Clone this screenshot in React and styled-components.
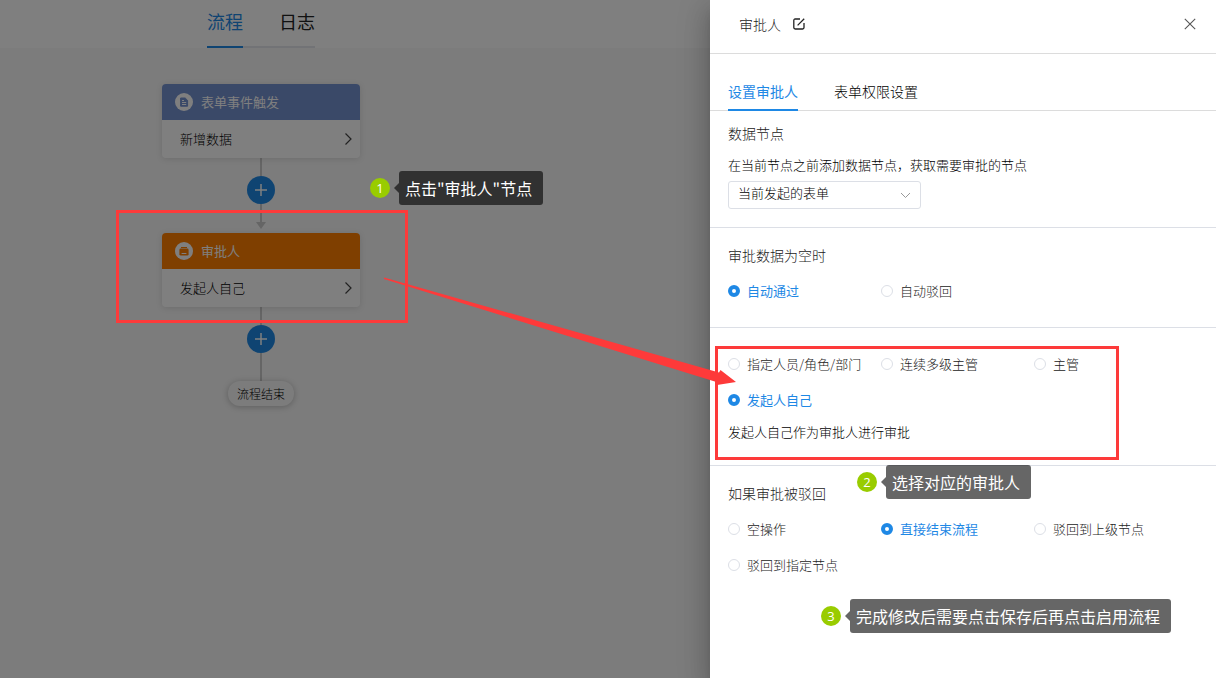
import React, { useState } from "react";
import styled, { createGlobalStyle } from "styled-components";

const GlobalStyle = createGlobalStyle`
  * {
    box-sizing: border-box;
  }

  body {
    margin: 0;
    color: #000;
    font-family: "Noto Sans CJK SC", sans-serif;
    font-size: 13px;
    font-weight: 300;
    line-height: 20px;
  }

  button, input, select {
    font: inherit;
    color: inherit;
  }

  button {
    padding: 0;
    border: 0;
    background: none;
    cursor: pointer;
  }

  svg {
    display: block;
  }
`;

const Page = styled.div`
  display: grid;
  grid-template-columns: minmax(0, 1fr) 506px;
  min-height: 100vh;
  overflow: hidden;
`;

const Workspace = styled.main`
  position: relative;
  background: #f8f8f8;
`;

const TopBar = styled.header`
  display: flex;
  justify-content: center;
  height: 48px;
  padding-right: 188px;
  background: #fff;
`;

const TopTabs = styled.nav`
  display: flex;
  gap: 36px;
  border-bottom: 2px solid #e4e7ed;
`;

const TopTab = styled.button`
  height: 48px;
  padding-bottom: 5px;
  font-size: 18px;
  font-weight: 400;
  color: ${(props) => (props.$active ? "#1e88e5" : "#222")};
  border-bottom: 2px solid ${(props) => (props.$active ? "#1e88e5" : "transparent")};
`;

const Flow = styled.div`
  display: flex;
  flex-direction: column;
  align-items: center;
  padding: 36px 188px 36px 0;
`;

const NodeWrap = styled.div`
  position: relative;
  width: 198px;
`;

const Node = styled.section`
  border-radius: 4px;
  overflow: hidden;
  background: #fff;
  box-shadow: 0 1px 6px rgba(0, 0, 0, 0.12);
`;

const NodeHead = styled.div`
  display: flex;
  align-items: center;
  gap: 8px;
  height: 36px;
  padding: 0 13px;
  font-weight: 400;
  color: #fff;
  background: ${(props) => props.$color};
`;

const NodeBody = styled.button`
  display: flex;
  align-items: center;
  justify-content: space-between;
  width: 100%;
  height: 38px;
  padding: 0 8px 0 18px;
`;

const Line = styled.div`
  width: 2px;
  height: ${(props) => (props.$long ? 28 : 18)}px;
  background: #cacaca;
`;

const ArrowDown = styled.div`
  margin-bottom: 4px;
  border: 5px solid transparent;
  border-top: 7px solid #cacaca;
  border-bottom: 0;
`;

const AddButton = styled.button`
  display: grid;
  place-items: center;
  width: 28px;
  height: 28px;
  border-radius: 50%;
  color: #fff;
  background: #1e88e5;
`;

const EndNode = styled.div`
  padding: 3px 9px 2px;
  border-radius: 12px;
  font-size: 12px;
  background: #f8f8f8;
  box-shadow: 0 1px 6px rgba(0, 0, 0, 0.24);
`;

const Mask = styled.div`
  position: absolute;
  inset: 0;
  z-index: 1;
  background: rgba(0, 0, 0, 0.5);
`;

const Drawer = styled.aside`
  position: relative;
  z-index: 2;
  background: #fff;
  box-shadow: 0 8px 10px -5px rgba(0, 0, 0, 0.2),
    0 16px 24px 2px rgba(0, 0, 0, 0.14), 0 6px 30px 5px rgba(0, 0, 0, 0.12);
`;

const DrawerHead = styled.header`
  display: flex;
  align-items: center;
  gap: 12px;
  height: 54px;
  padding: 0 20px 6px 29px;
  border-bottom: 1px solid #dcdcdc;
  color: #222;
`;

const DrawerTitle = styled.h1`
  margin: 0;
  font-size: 14px;
  font-weight: inherit;
  line-height: 18px;
`;

const CloseButton = styled.button`
  margin-left: auto;
  color: #555;
`;

const DrawerTabs = styled.nav`
  display: flex;
  gap: 36px;
  padding: 18px 18px 0;
  box-shadow: inset 0 -1px #dcdcdc;
`;

const DrawerTab = styled.button`
  height: 39px;
  font-size: 14px;
  font-weight: ${(props) => (props.$active ? 400 : 300)};
  color: ${(props) => (props.$active ? "#1e88e5" : "#000")};
  border-bottom: 2px solid ${(props) => (props.$active ? "#1e88e5" : "transparent")};
`;

const Section = styled.section`
  position: relative;
  padding: ${(props) => props.$pad};
  border-bottom: 1px solid #dcdfe6;

  &:last-of-type {
    border-bottom: 0;
  }
`;

const SectionTitle = styled.h2`
  margin: 0 0 ${(props) => props.$gap || "17px"};
  font-size: 14px;
  font-weight: inherit;
  line-height: 18px;
  color: #222;
`;

const SelectLabel = styled.label`
  display: block;
  margin-bottom: 6px;
`;

const SelectBox = styled.div`
  display: grid;
  align-items: center;
  width: 193px;

  select, svg {
    grid-area: 1 / 1;
  }

  svg {
    justify-self: end;
    margin-right: 10px;
    color: #999;
    pointer-events: none;
  }
`;

const Select = styled.select`
  appearance: none;
  height: 28px;
  padding: 0 28px 4px 9px;
  border: 1px solid #dcdfe6;
  border-radius: 3px;
  background: #fff;
`;

const RadioGrid = styled.div`
  display: grid;
  grid-template-columns: repeat(3, 153px);
  row-gap: 16px;
`;

const RadioLabel = styled.label`
  display: flex;
  align-items: center;
  gap: 7px;
  white-space: nowrap;
  color: #222;

  &:has(input:checked) {
    font-weight: 400;
    color: #1e88e5;
  }
`;

const RadioInput = styled.input`
  appearance: none;
  width: 12px;
  height: 12px;
  margin: 0;
  border: 1px solid #dcdfe6;
  border-radius: 50%;
  background: #fff;

  &:checked {
    border: 4px solid #1e88e5;
  }
`;

const Hint = styled.p`
  margin: 12px 0 0;
`;

const Highlight = styled.div`
  position: absolute;
  z-index: 2;
  inset: ${(props) => props.$inset};
  border: 3px solid #fd3a3a;
  pointer-events: none;
`;

const Callout = styled.div`
  position: absolute;
  z-index: 3;
  left: ${(props) => props.$left}px;
  top: ${(props) => props.$top}px;
  display: flex;
  align-items: center;
  white-space: nowrap;
  font-weight: 400;
  color: #fff;
`;

const Badge = styled.span`
  width: 20px;
  height: 20px;
  border-radius: 50%;
  font-family: "Open Sans", sans-serif;
  text-align: center;
  background: #99cc00;
`;

const Pointer = styled.span`
  margin-left: 4px;
  border: 5px solid transparent;
  border-right-color: rgba(0, 0, 0, 0.6);
  border-left: 0;
`;

const Bubble = styled.span`
  padding: 7px 11px 7px 6px;
  border-radius: 3px;
  font-size: 16px;
  background: rgba(0, 0, 0, 0.6);
`;

const LongArrow = styled.svg`
  position: absolute;
  z-index: 3;
  left: -330px;
  top: 270px;
  pointer-events: none;
`;

function ChevronRight() {
  return (
    <svg width="8" height="14" viewBox="0 0 8 14" fill="none" stroke="#444" strokeWidth="1.2">
      <path d="M1.5 1.5 7 7l-5.5 5.5" />
    </svg>
  );
}

function Plus() {
  return (
    <svg width="14" height="14" viewBox="0 0 14 14" fill="none" stroke="currentColor" strokeWidth="1.5">
      <path d="M7 1v12M1 7h12" />
    </svg>
  );
}

function FormIcon({ color }) {
  return (
    <svg width="18" height="18" viewBox="0 0 18 18">
      <circle cx="9" cy="9" r="9" fill="#fff" />
      <path d="M5.6 5h4.6l2.4 2.4v5.8h-7z" fill={color} stroke={color} strokeLinejoin="round" />
      <path d="M7 7.5h2M7 9.5h4.2M7 11.5h4.2" stroke="#fff" />
    </svg>
  );
}

function ApproveIcon({ color }) {
  return (
    <svg width="18" height="18" viewBox="0 0 18 18" fill="none">
      <circle cx="9" cy="9" r="9" fill="#fff" />
      <path d="M6 5.5h6" stroke={color} />
      <rect x="4.4" y="6.6" width="9.2" height="7" rx="1.4" fill={color} />
      <path d="M6.6 11.5h4.8" stroke="#fff" />
    </svg>
  );
}

function EditIcon() {
  return (
    <svg width="12" height="12" viewBox="0 0 12 12" fill="none" stroke="currentColor" strokeWidth="1.3">
      <path d="M7 1H2.2Q.8 1 .8 2.4v7.2Q.8 11 2.2 11h7.4Q11 11 11 9.6V5M4.6 7.4 11.2.8" />
    </svg>
  );
}

function CloseIcon() {
  return (
    <svg width="12" height="12" viewBox="0 0 12 12" fill="none" stroke="currentColor" strokeWidth="1.1">
      <path d="m.8.8 10.4 10.4M11.2.8.8 11.2" />
    </svg>
  );
}

function FlowNode({ title, text, color, icon, children }) {
  return (
    <NodeWrap>
      <Node>
        <NodeHead $color={color}>
          {icon}
          {title}
        </NodeHead>
        <NodeBody type="button">
          {text}
          <ChevronRight />
        </NodeBody>
      </Node>
      {children}
    </NodeWrap>
  );
}

function RadioList({ name, options, initial }) {
  const [value, setValue] = useState(initial);

  return (
    <RadioGrid role="radiogroup">
      {options.map((option) => (
        <RadioLabel key={option}>
          <RadioInput
            type="radio"
            name={name}
            checked={value === option}
            onChange={() => setValue(option)}
          />
          {option}
        </RadioLabel>
      ))}
    </RadioGrid>
  );
}

function Step({ number, left, top, children }) {
  return (
    <Callout $left={left} $top={top}>
      <Badge>{number}</Badge>
      <Pointer />
      <Bubble>{children}</Bubble>
    </Callout>
  );
}

const BLUE = "#7492d0";
const ORANGE = "#ff7e00";

const App = () => {
  return (
    <Page>
      <GlobalStyle />
      <Workspace>
        <TopBar>
          <TopTabs>
            <TopTab type="button" $active>流程</TopTab>
            <TopTab type="button">日志</TopTab>
          </TopTabs>
        </TopBar>
        <Flow>
          <FlowNode
            title="表单事件触发"
            text="新增数据"
            color={BLUE}
            icon={<FormIcon color={BLUE} />}
          />
          <Line />
          <AddButton type="button" aria-label="+"><Plus /></AddButton>
          <Line />
          <ArrowDown />
          <FlowNode
            title="审批人"
            text="发起人自己"
            color={ORANGE}
            icon={<ApproveIcon color={ORANGE} />}
          >
            <Highlight $inset="-23px -48px -16px -46px" />
            <Step number={1} left={208} top={-62}>点击"审批人"节点</Step>
          </FlowNode>
          <Line />
          <AddButton type="button" aria-label="+"><Plus /></AddButton>
          <Line $long />
          <EndNode>流程结束</EndNode>
        </Flow>
        <Mask />
      </Workspace>

      <Drawer>
        <DrawerHead>
          <DrawerTitle>审批人</DrawerTitle>
          <button type="button" aria-label="编辑"><EditIcon /></button>
          <CloseButton type="button" aria-label="关闭"><CloseIcon /></CloseButton>
        </DrawerHead>
        <DrawerTabs>
          <DrawerTab type="button" $active>设置审批人</DrawerTab>
          <DrawerTab type="button">表单权限设置</DrawerTab>
        </DrawerTabs>

        <Section $pad="13px 18px 18px">
          <SectionTitle $gap="13px">数据节点</SectionTitle>
          <SelectLabel htmlFor="data-node">
            在当前节点之前添加数据节点，获取需要审批的节点
          </SelectLabel>
          <SelectBox>
            <Select id="data-node">
              <option>当前发起的表单</option>
            </Select>
            <svg width="11" height="7" viewBox="0 0 11 7" fill="none" stroke="currentColor">
              <path d="M1 1l4.5 4.5L10 1" />
            </svg>
          </SelectBox>
        </Section>

        <Section $pad="18px 18px 26px">
          <SectionTitle>审批数据为空时</SectionTitle>
          <RadioList name="empty" initial="自动通过" options={["自动通过", "自动驳回"]} />
        </Section>

        <Section $pad="26px 18px 23px">
          <RadioList
            name="approver"
            initial="发起人自己"
            options={["指定人员/角色/部门", "连续多级主管", "主管", "发起人自己"]}
          />
          <Hint>发起人自己作为审批人进行审批</Hint>
          <Highlight $inset="18px 97px 5px 5px" />
        </Section>

        <Section $pad="18px 18px 26px">
          <SectionTitle>如果审批被驳回</SectionTitle>
          <RadioList
            name="rejected"
            initial="直接结束流程"
            options={["空操作", "直接结束流程", "驳回到上级节点", "驳回到指定节点"]}
          />
          <Step number={2} left={147} top={-1}>选择对应的审批人</Step>
          <Step number={3} left={111} top={133}>完成修改后需要点击保存后再点击启用流程</Step>
        </Section>

        <LongArrow width="360" height="120" viewBox="380 270 360 120">
          <path d="M384 277.4 719 372.4 720.5 370 736 382 717 385 718 382.6 384 279z" fill="#fd3a3a" />
        </LongArrow>
      </Drawer>
    </Page>
  );
};

export default App;
